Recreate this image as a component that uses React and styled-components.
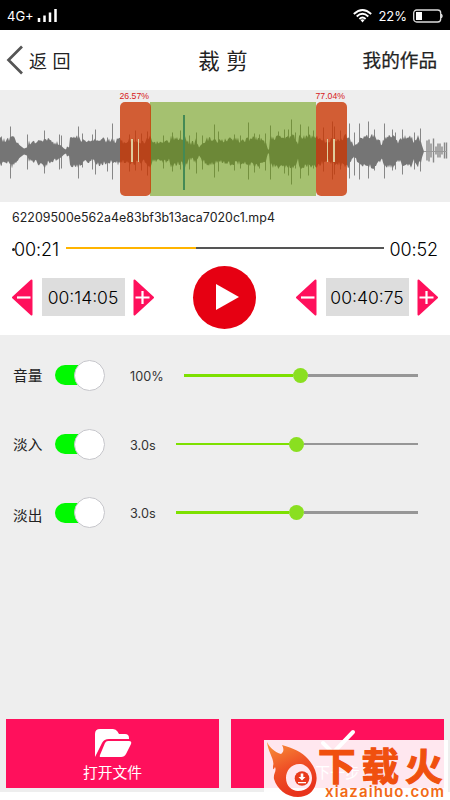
import React from "react";
import styled, { createGlobalStyle } from "styled-components";

const GlobalStyle = createGlobalStyle`
  * { box-sizing: border-box; }
  body { margin: 0; background: #fff; }
`;

const Screen = styled.div`
  position: relative;
  width: 450px;
  height: 800px;
  overflow: hidden;
  display: flex;
  flex-direction: column;
  background: #fff;
  color: #222;
  font-family: Inter, "Noto Sans CJK SC", sans-serif;
  white-space: nowrap;
`;

const StatusBar = styled.div`
  height: 30px;
  flex: none;
  display: flex;
  justify-content: space-between;
  align-items: center;
  padding: 1px 7px 0;
  background: #000;
  color: #fff;
  font-size: 13px;
`;

const StatusGroup = styled.div`
  display: flex;
  align-items: center;
  gap: ${(p) => p.$gap}px;
`;

const Header = styled.header`
  height: 60px;
  flex: none;
  display: grid;
  grid-template-columns: 1fr auto 1fr;
  align-items: center;
  padding: 0 13px 0 6px;
`;

const BackButton = styled.div`
  display: flex;
  align-items: center;
  gap: 5px;
  font-size: 18px;
  word-spacing: 0.5px;
`;

const Title = styled.div`
  font-size: 21.5px;
  line-height: 30px;
  word-spacing: 0.5px;
  padding-top: 2px;
  margin-right: -3px;
`;

const WorksLink = styled.div`
  justify-self: end;
  font-size: 18.6px;
  line-height: 28px;
  -webkit-text-stroke: 0.25px #222;
`;

const WavePanel = styled.section`
  position: relative;
  height: 112px;
  flex: none;
  background: #eee;

  svg { display: block; }
`;

const Selection = styled.div`
  position: absolute;
  left: 150px;
  top: 12px;
  width: 166px;
  height: 94px;
  background: rgba(100, 153, 0, 0.53);
`;

const Playhead = styled.div`
  position: absolute;
  left: 183px;
  top: 25px;
  width: 2px;
  height: 75px;
  background: #448a55;
`;

const Handle = styled.div`
  position: absolute;
  left: ${(p) => p.$x}px;
  top: 12px;
  width: 31px;
  height: 94px;
  border-radius: 5px;
  background: rgba(202, 53, 1, 0.79);
  display: flex;
  justify-content: center;
  align-items: center;
  gap: 5px;
  padding: 3px 1px 0 0;
`;

const Grip = styled.span`
  width: 1.5px;
  height: 23px;
  background: #e0cd9c;
`;

const Percent = styled.span`
  position: absolute;
  left: ${(p) => p.$x}px;
  top: 0;
  font: 8.7px/12px "Liberation Sans", sans-serif;
  color: #d71920;
`;

const Player = styled.section`
  height: 133px;
  flex: none;
  padding: 6px 12px 0;
`;

const FileName = styled.div`
  height: 21px;
  font-size: 12.4px;
  line-height: 19px;
  letter-spacing: 0.04px;
`;

const TimeRow = styled.div`
  display: grid;
  grid-template-columns: 54px 318px 54px;
  align-items: center;
  height: 38px;
  font-size: 18px;
  font-weight: 300;
  letter-spacing: -0.1px;
  color: #000;
`;

const TimeText = styled.span`
  display: flex;
  align-items: center;
  line-height: 22px;
  padding-top: 3px;
  justify-content: ${(p) => (p.$end ? "flex-end" : "flex-start")};
`;

const Dot = styled.i`
  width: 3px;
  height: 3px;
  margin-right: -1px;
  border-radius: 50%;
  background: #222;
`;

const Track = styled.div`
  height: 2.5px;
  background: linear-gradient(to right, ${(p) => p.$fill} ${(p) => p.$at}px, ${(p) => p.$rest} ${(p) => p.$at}px);
`;

const ControlRow = styled.div`
  height: 63px;
  display: flex;
  justify-content: space-between;
  align-items: center;
  margin-top: -1.5px;
`;

const Stepper = styled.div`
  display: flex;
  align-items: center;
  gap: 8.5px;
`;

const TimeBox = styled.div`
  width: 83px;
  height: 38px;
  background: #ddd;
  color: #000;
  text-align: center;
  font-size: 17.5px;
  font-weight: 300;
  line-height: 40px;
`;

const PlayButton = styled.div`
  width: 63px;
  height: 63px;
  margin-right: 1px;
  border-radius: 50%;
  background: #e60012;
  display: flex;
  align-items: center;
  justify-content: center;
`;

const Settings = styled.section`
  height: 457px;
  flex: none;
  display: flex;
  flex-direction: column;
  padding: 6px 6px 4px;
  background: #eee;
`;

const SettingRow = styled.div`
  display: grid;
  grid-template-columns: 42px 50px 1fr auto;
  align-items: center;
  height: 68.7px;
  padding: 0 26px 0 7px;
`;

const SettingLabel = styled.span`
  font-size: 14.7px;
  line-height: 20px;
  padding-top: ${(p) => p.$drop}px;
`;

const Switch = styled.div`
  display: flex;
  align-items: center;
  justify-content: flex-end;
  width: 50px;
  height: 20px;
  border-radius: 10px;
  background: linear-gradient(to right, #00f900 35px, transparent 35px);
`;

const Knob = styled.span`
  flex: none;
  width: 31px;
  height: 31px;
  border-radius: 50%;
  border: 1.5px solid #c6c6cb;
  background: #fff;
`;

const SettingValue = styled.span`
  padding: 2px 0 0 25px;
  font-size: 12.7px;
  color: #333;
`;

const Slider = styled.div`
  width: ${(p) => p.$width}px;
  height: 15px;
  display: flex;
  align-items: center;
`;

const SliderFill = styled.span`
  flex: none;
  width: ${(p) => p.$width}px;
  height: 2.5px;
  background: #7de000;
`;

const SliderThumb = styled.span`
  flex: none;
  width: 15px;
  height: 15px;
  border-radius: 50%;
  background: #8adf20;
`;

const SliderRest = styled.span`
  flex: 1;
  height: 2.5px;
  background: #969696;
`;

const Actions = styled.div`
  margin-top: auto;
  display: grid;
  grid-template-columns: 213px 213px;
  justify-content: space-between;
`;

const ActionButton = styled.div`
  height: 69px;
  background: #ff105c;
  color: #fff;
  display: flex;
  flex-direction: column;
  align-items: center;
  padding-top: 10px;
  font-size: 14.8px;
  line-height: 20px;
  gap: 5px;

  svg { flex: none; }
`;

const Watermark = styled.div`
  position: absolute;
  left: 264px;
  top: 740px;
  width: 184px;
  height: 60px;
  background: rgba(255, 255, 255, 0.9);
  display: flex;
`;

const Brand = styled.div`
  display: flex;
  flex-direction: column;
`;

const BrandName = styled.span`
  height: 44px;
  font-family: "Noto Sans CJK SC", sans-serif;
  font-weight: 700;
  font-size: 37.5px;
  line-height: 48px;
  letter-spacing: 6px;
  margin-right: -14px;
  color: #f0500f;
  -webkit-text-stroke: 1.2px #f0500f;
`;

const BrandSite = styled.span`
  padding-left: 7px;
  font-size: 15px;
  font-weight: 600;
  line-height: 15px;
  letter-spacing: 1.1px;
  color: #f26a16;
`;

// Envelope points: [x, half height]
const ENVELOPE = [
  [0, 13], [3, 11], [5, 10], [9, 11], [12, 14], [15, 11], [20, 6], [24, 3], [27, 4],
  [29, 8], [33, 9], [37, 9], [39, 12], [42, 10], [45, 14], [49, 10], [56, 8], [61, 6],
  [64, 3], [66, 2], [67, 5], [69, 4], [70, 14], [77, 14], [82, 11], [87, 9], [93, 9],
  [99, 12], [106, 11], [115, 10], [120, 12], [124, 9], [133, 11], [144, 9], [150, 14],
  [154, 8], [160, 9], [169, 9], [171, 14], [176, 12], [182, 11], [185, 14], [189, 7],
  [194, 8], [196, 12], [199, 4], [202, 8], [207, 12], [213, 11], [220, 10], [226, 11],
  [234, 12], [242, 10], [247, 12], [256, 13], [262, 12], [266, 8], [268, 2], [269, 2],
  [270, 13], [277, 14], [286, 14], [294, 15], [298, 7], [299, 15], [307, 14], [315, 14],
  [329, 8], [331, 11], [340, 12], [347, 15], [350, 12], [354, 5], [358, 10], [366, 14],
  [374, 15], [382, 7], [385, 14], [393, 14], [399, 9], [403, 14], [411, 14], [414, 8],
  [418, 14], [421, 9], [424, 0],
];

// Transient peaks: [x, rise, fall]
const PEAKS = [
  [10.5, 25, 27], [1.5, 15, 14], [27.5, 17, 18], [44.5, 21, 22], [59.5, 17, 18], [61.5, 16, 17],
  [78.5, 25, 27], [82.5, 18, 16], [92.5, 17, 18], [95.5, 22, 23], [112.5, 28, 28], [107.5, 14, 20],
  [129.5, 17, 20], [135.5, 21, 19], [141.5, 18, 19], [147.5, 20, 24], [163.5, 16, 17], [172.5, 19, 20],
  [180.5, 21, 18], [189.5, 16, 18], [196.5, 19, 22], [202.5, 16, 18], [214.5, 27, 26], [218.5, 20, 20],
  [234.5, 17, 19], [240.5, 16, 17], [248.5, 29, 28], [254.5, 18, 21], [259.5, 17, 17], [265.5, 18, 19],
  [270.5, 26, 28], [278.5, 20, 17], [284.5, 22, 22], [288.5, 22, 24], [291.5, 32, 33], [295.5, 19, 17],
  [300.5, 27, 27], [308.5, 25, 24], [313.5, 21, 17], [323.5, 24, 20], [332.5, 30, 28], [334.5, 25, 23],
  [340.5, 21, 18], [349.5, 28, 27], [354.5, 19, 24], [359.5, 28, 28], [368.5, 30, 27],
  [374.5, 22, 19], [384.5, 28, 27], [392.5, 22, 19], [395.5, 19, 18], [402.5, 22, 23], [414.5, 19, 18],
  [420.5, 23, 20],
];

const TAIL = [
  [427, 11], [429, 12], [431, 8], [433.5, 13], [436, 5], [438, 8],
  [440, 8], [442, 5], [444.5, 9], [446.5, 9],
];

const MID = 61.5;

function heightAt(x) {
  for (let i = 1; i < ENVELOPE.length; i += 1) {
    const [x1, h1] = ENVELOPE[i];
    const [x0, h0] = ENVELOPE[i - 1];
    if (x <= x1) return h0 + ((h1 - h0) * (x - x0)) / (x1 - x0);
  }
  return 0;
}

function jitter(n) {
  const v = Math.sin(n * 127.1 + 11.7) * 43758.5453;
  return (v - Math.floor(v) - 0.4) * 5;
}

function bodyPath() {
  const top = [];
  const bottom = [];
  for (let x = 0; x <= 424; x += 1) {
    const h = heightAt(x);
    const a = h > 7 ? jitter(x) : 0;
    const b = h > 7 ? jitter(x + 900) : 0;
    top.push(`${x} ${(MID - h - a).toFixed(1)}`);
    bottom.unshift(`${x} ${(MID + h + b).toFixed(1)}`);
  }
  return `M${top.join("L")}L${bottom.join("L")}Z`;
}

function Waveform() {
  return (
    <svg width="450" height="112">
      <path d={bodyPath()} fill="#757575" />
      <g stroke="#757575" strokeWidth="1" opacity="0.85">
        {PEAKS.map(([x, up, down]) => (
          <path key={x} d={`M${x} ${MID - up}V${MID + down}`} />
        ))}
      </g>
      <g stroke="#777" strokeWidth="1.4" opacity="0.85">
        {TAIL.map(([x, h]) => (
          <path key={x} d={`M${x} ${MID - h}V${MID + h - 2}`} />
        ))}
      </g>
      <path d="M424 61.5H447" stroke="#999" />
    </svg>
  );
}

function StepArrow({ plus }) {
  return (
    <svg width="21" height="37" viewBox="0 0 21 37">
      <path
        d={plus ? "M1.5 1.5L20 18.5L1.5 35.5Z" : "M19.5 1.5L1 18.5L19.5 35.5Z"}
        fill="#ff105c"
        stroke="#ff105c"
        strokeWidth="2"
        strokeLinejoin="round"
      />
      <path
        d={plus ? "M2.5 18.5H16.5M9.5 12V25" : "M5 18.5H18.5"}
        stroke="#fff"
        strokeWidth="2.2"
      />
    </svg>
  );
}

function TimeStepper({ value }) {
  return (
    <Stepper>
      <StepArrow />
      <TimeBox>{value}</TimeBox>
      <StepArrow plus />
    </Stepper>
  );
}

function Setting({ label, value, width, fill, drop }) {
  return (
    <SettingRow>
      <SettingLabel $drop={drop}>{label}</SettingLabel>
      <Switch><Knob /></Switch>
      <SettingValue>{value}</SettingValue>
      <Slider $width={width}>
        <SliderFill $width={fill} />
        <SliderThumb />
        <SliderRest />
      </Slider>
    </SettingRow>
  );
}

function FlameLogo() {
  return (
    <svg width="54" height="60" viewBox="0 0 54 60">
      <defs>
        <linearGradient id="flame" x1="0" y1="0" x2="0.4" y2="1">
          <stop offset="0" stopColor="#f8953a" />
          <stop offset="0.55" stopColor="#ef5026" />
          <stop offset="1" stopColor="#e8331c" />
        </linearGradient>
      </defs>
      <path
        fill="url(#flame)"
        fillRule="evenodd"
        d="M3 2C6 8 11 12 17 14C20 12 20 9 18 5C29 8 38 12 44 19C51 27 54 35 52 43C50 52 43 57 34 57C22 57 13 49 10 39C9 34 13 31 11 27C9 31 9 29 9 26C11 20 4 12 3 2ZM37 24C28 23 22 30 22 38C22 46 28 51 34 51C43 51 48 45 48 38C48 31 43 25 37 24Z"
      />
      <circle cx="38" cy="38.500" r="7.300" fill="#e83a1c" />
      <path d="M36.700 33.500H39.300V37H41.500L38 40.500L34.500 37H36.700ZM34 42H42V43.300H34Z" fill="#fff" />
    </svg>
  );
}

export default function App() {
  return (
    <Screen>
      <GlobalStyle />
      <StatusBar>
        <StatusGroup $gap={3}>
          4G+
          <svg width="20" height="15" viewBox="0 0 20 15">
            <path d="M2 10V14M7.500 7.500V14M13 4.500V14M18.500 1V14" stroke="#fff" strokeWidth="2.500" />
          </svg>
        </StatusGroup>
        <StatusGroup $gap={6}>
          <svg width="19" height="14" viewBox="0 0 19 14" fill="none" stroke="#fff" strokeWidth="1.800">
            <path d="M.8 5Q9.500 -3 18.200 5M3.700 7.500Q9.500 2 15.300 7.500M6.400 10Q9.500 7 12.600 10" />
            <path d="M7.500 11Q9.500 9.500 11.500 11L9.500 13.500Z" fill="#fff" stroke="none" />
          </svg>
          <span>22%</span>
          <svg width="30" height="14" viewBox="0 0 30 14">
            <rect x=".7" y="1" width="27" height="12" rx="3" fill="none" stroke="#ddd" strokeWidth="1.300" />
            <rect x="3" y="3" width="6" height="8" fill="#fff" />
            <path d="M28.500 5Q30 7 28.500 9Z" fill="#ddd" stroke="#ddd" />
          </svg>
        </StatusGroup>
      </StatusBar>

      <Header>
        <BackButton>
          <svg width="18" height="30" viewBox="0 0 18 30" fill="none">
            <path d="M16 1.500L2.500 15L16 28.500" stroke="#555" strokeWidth="2.700" />
          </svg>
          返 回
        </BackButton>
        <Title>裁 剪</Title>
        <WorksLink>我的作品</WorksLink>
      </Header>

      <WavePanel>
        <Waveform />
        <Selection />
        <Playhead />
        <Handle $x={120}><Grip /><Grip /></Handle>
        <Handle $x={315.5}><Grip /><Grip /></Handle>
        <Percent $x={119.5}>26.57%</Percent>
        <Percent $x={315.5}>77.04%</Percent>
      </WavePanel>

      <Player>
        <FileName>62209500e562a4e83bf3b13aca7020c1.mp4</FileName>
        <TimeRow>
          <TimeText><Dot />00:21</TimeText>
          <Track $fill="#ffb400" $rest="#555" $at={130} />
          <TimeText $end>00:52</TimeText>
        </TimeRow>
        <ControlRow>
          <TimeStepper value="00:14:05" />
          <PlayButton>
            <svg width="31" height="28" viewBox="0 0 31 28">
              <path d="M7 1L30 14L7 27Z" fill="#fff" />
            </svg>
          </PlayButton>
          <TimeStepper value="00:40:75" />
        </ControlRow>
      </Player>

      <Settings>
        <Setting label="音量" value="100%" width={234.5} fill={109.5} drop={1} />
        <Setting label="淡入" value="3.0s" width={242} fill={113} drop={1} />
        <Setting label="淡出" value="3.0s" width={242} fill={113} drop={6} />
        <Actions>
          <ActionButton>
            <svg width="38" height="29" viewBox="0 0 38 29" fill="#fff">
              <path d="M1 28V5Q1 0 6 0H19Q22 0 23.500 2.500L25 5H31Q35 5 35 9V10H15Q10 10 8 14Z" />
              <path d="M14 12H35Q38 12 37 15L32 25Q30.500 28 27 28H7Q5 28 6 26L11 14Q12 12 14 12Z" />
            </svg>
            打开文件
          </ActionButton>
          <ActionButton>
            <svg width="36" height="29" viewBox="0 0 36 29" fill="none">
              <path d="M3 14L13 24L33 3" stroke="#fff" strokeWidth="4" strokeLinecap="round" />
            </svg>
            下一步
          </ActionButton>
        </Actions>
      </Settings>

      <Watermark>
        <FlameLogo />
        <Brand>
          <BrandName>下载火</BrandName>
          <BrandSite>xiazaihuo.com</BrandSite>
        </Brand>
      </Watermark>
    </Screen>
  );
}
